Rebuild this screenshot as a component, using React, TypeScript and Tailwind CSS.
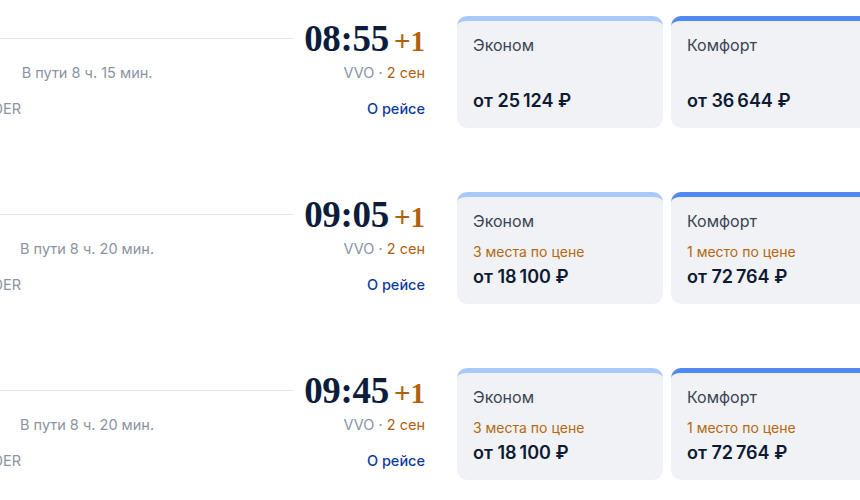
import React from "react";

type Fare = { name: string; seats?: string; price: string; band: string };
type Flight = { time: string; duration: string; fares: Fare[] };

const flights: Flight[] = [
  {
    time: "08:55",
    duration: "В пути 8 ч. 15 мин.",
    fares: [
      { name: "Эконом", price: "25\u202F124", band: "border-[#a8c9fb]" },
      { name: "Комфорт", price: "36\u202F644", band: "border-[#4f89f1]" },
    ],
  },
  {
    time: "09:05",
    duration: "В пути 8 ч. 20 мин.",
    fares: [
      { name: "Эконом", seats: "3 места по цене", price: "18\u202F100", band: "border-[#a8c9fb]" },
      { name: "Комфорт", seats: "1 место по цене", price: "72\u202F764", band: "border-[#4f89f1]" },
    ],
  },
  {
    time: "09:45",
    duration: "В пути 8 ч. 20 мин.",
    fares: [
      { name: "Эконом", seats: "3 места по цене", price: "18\u202F100", band: "border-[#a8c9fb]" },
      { name: "Комфорт", seats: "1 место по цене", price: "72\u202F764", band: "border-[#4f89f1]" },
    ],
  },
];

const FareCard = ({ fare }: { fare: Fare }) => (
  <div className={`w-[206px] h-[112px] shrink-0 rounded-[10px] border-t-[5px] ${fare.band} bg-[#f1f2f5] px-4 pt-3 flex flex-col`}>
    <div className="text-[16px] leading-6 text-[#3a4455]">{fare.name}</div>
    <div className="mt-[9px] h-5 text-[14px] leading-5 text-[#b5680f]">{fare.seats ?? ""}</div>
    <div className="mt-px text-[18px] leading-7 font-semibold text-[#0d1a31]">
      от {fare.price} ₽
    </div>
  </div>
);

export default function App() {
  return (
    <div className="w-[860px] h-[500px] overflow-hidden bg-white font-['Inter','Liberation_Sans',sans-serif]">
      {flights.map((f, i) => (
        <div key={i} className="flex h-[176px]">
          <div className="w-[545px] -ml-[120px] shrink-0 pt-[21px]">
            <div className="grid grid-cols-[1fr_auto] gap-x-[10px] gap-y-1 items-center">
              <div className="h-px bg-[#e3e5e9] -mt-[3px]" />
              <div className="flex items-baseline gap-[5px] leading-9">
                <span className="font-['Liberation_Serif',serif] font-bold text-[37px] tracking-[-0.3px] text-[#0b1d3d]">{f.time}</span>
                <span className="font-['Liberation_Serif',serif] font-bold text-[29px] text-[#b0600f]">+1</span>
              </div>
              <div className="text-center text-[14.5px] leading-5 text-[#8b939f]">{f.duration}</div>
              <div className="text-right text-[14.5px] leading-5 text-[#8b939f]">
                VVO · <span className="text-[#b0600f]">2 сен</span>
              </div>
            </div>
            <div className="mt-4 flex justify-between text-[14.5px] leading-5">
              <span className="w-[141px] text-right text-[#8b939f]">PROVIDER</span>
              <span className="font-medium text-[#0b3a9e]">О рейсе</span>
            </div>
          </div>
          <div className="ml-8 pt-4 flex gap-2 shrink-0">
            {f.fares.map((fare, j) => (
              <FareCard key={j} fare={fare} />
            ))}
          </div>
        </div>
      ))}
    </div>
  );
}
